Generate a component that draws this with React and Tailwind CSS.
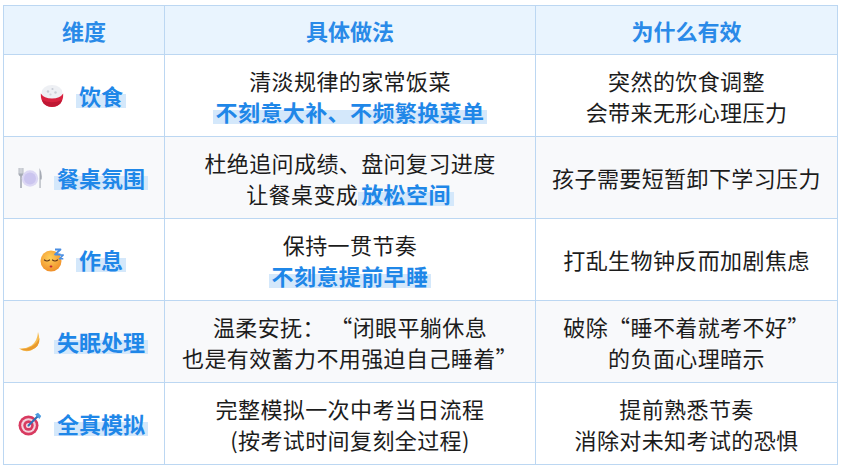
const Rice = () => (
  <svg width="24" height="24" viewBox="0 0 24 24">
    <ellipse cx="12" cy="9" rx="10.5" ry="8" fill="#eef0f4" />
    <circle cx="8" cy="7.5" r="1.2" fill="#c8ccd4" />
    <circle cx="12.5" cy="5" r="1.1" fill="#c8ccd4" />
    <circle cx="15.5" cy="8.5" r="1.2" fill="#c8ccd4" />
    <circle cx="10.5" cy="10.5" r="1.1" fill="#d2d5dc" />
    <path d="M0.8 9.5 Q0.5 22.5 12 23 Q23.5 22.5 23.2 9.5 Q20 14.5 12 14.5 Q4 14.5 0.8 9.5 Z" fill="#d8223f" />
    <path d="M2 16 Q12 20.5 22 16 Q20 22.5 12 22.8 Q4 22.5 2 16 Z" fill="#bf1834" />
  </svg>
);

const Plate = () => (
  <svg width="24" height="24" viewBox="0 0 24 24">
    <rect x="0.6" y="2" width="1" height="6" fill="#a6abb5" />
    <rect x="2.5" y="2" width="1" height="6" fill="#a6abb5" />
    <rect x="4.4" y="2" width="1" height="6" fill="#a6abb5" />
    <path d="M0.6 7.5 H5.4 V9 L3.8 10.5 V22 H2.2 V10.5 L0.6 9 Z" fill="#a6abb5" />
    <circle cx="12" cy="12.5" r="8.2" fill="#dcd8f4" />
    <circle cx="12" cy="12.5" r="6" fill="#cbc5ef" />
    <path d="M21.5 2 Q24.5 7 23.6 13.5 H22.6 V22 H21.5 Z" fill="#a6abb5" />
  </svg>
);

const Sleep = () => (
  <svg width="24" height="24" viewBox="0 0 24 24">
    <defs>
      <radialGradient id="sf" cx="0.45" cy="0.35" r="0.65">
        <stop offset="0" stopColor="#ffd05a" />
        <stop offset="1" stopColor="#f0902a" />
      </radialGradient>
    </defs>
    <circle cx="11" cy="13" r="10.5" fill="url(#sf)" />
    <path d="M4.5 12 Q7 14 9.5 12" stroke="#5c3318" strokeWidth="1.2" fill="none" strokeLinecap="round" />
    <path d="M12.5 12 Q15 14 17.5 12" stroke="#5c3318" strokeWidth="1.2" fill="none" strokeLinecap="round" />
    <ellipse cx="11" cy="18.5" rx="1.4" ry="1.1" fill="#c2263a" />
    <path d="M15 1.5 H20.5 L15 6.5 H20.5" stroke="#4a8ee2" strokeWidth="1.8" fill="none" strokeLinejoin="round" />
    <path d="M19.5 7 H23.3 L19.5 10.8 H23.3" stroke="#4a8ee2" strokeWidth="1.5" fill="none" strokeLinejoin="round" />
  </svg>
);

const Moon = () => (
  <svg width="24" height="24" viewBox="0 0 24 24">
    <path d="M20 2 Q24.5 16 13 20.5 Q6 22.5 1 18.5 Q8 19 13.5 15.5 Q19.5 11 20 2 Z" fill="#f6bd52" />
    <path d="M21.5 8 Q22 17 13 20 Q7 21.5 2.5 19 Q8 19.5 13.5 16.5 Q19.5 13 21.5 8 Z" fill="#e99a2e" />
  </svg>
);

const Target = () => (
  <svg width="24" height="24" viewBox="0 0 24 24">
    <circle cx="10.5" cy="13.5" r="10" fill="#d83a60" />
    <circle cx="10.5" cy="13.5" r="7.3" fill="#f4d2dc" />
    <circle cx="10.5" cy="13.5" r="5.2" fill="#d83a60" />
    <circle cx="10.5" cy="13.5" r="2.6" fill="#f4d2dc" />
    <path d="M10.5 13.5 L19.5 4.5" stroke="#2f6fb6" strokeWidth="2" strokeLinecap="round" />
    <path d="M17 2.5 L20 0.8 L23.2 4 L21.5 7 Z" fill="#4a9be0" />
  </svg>
);

const Hl = ({ children }) => (
  <span className="font-bold text-[#1f87e8] px-[3px] bg-[linear-gradient(transparent_48%,#d4e8fb_48%,#d4e8fb_92%,transparent_92%)]">
    {children}
  </span>
);

const rows = [
  {
    icon: <Rice />,
    label: '饮食',
    how: (
      <>
        清淡规律的家常饭菜
        <br />
        <Hl>不刻意大补、不频繁换菜单</Hl>
      </>
    ),
    why: (
      <>
        突然的饮食调整
        <br />
        会带来无形心理压力
      </>
    ),
  },
  {
    icon: <Plate />,
    label: '餐桌氛围',
    how: (
      <>
        杜绝追问成绩、盘问复习进度
        <br />
        让餐桌变成<Hl>放松空间</Hl>
      </>
    ),
    why: <>孩子需要短暂卸下学习压力</>,
  },
  {
    icon: <Sleep />,
    label: '作息',
    how: (
      <>
        保持一贯节奏
        <br />
        <Hl>不刻意提前早睡</Hl>
      </>
    ),
    why: <>打乱生物钟反而加剧焦虑</>,
  },
  {
    icon: <Moon />,
    label: '失眠处理',
    how: (
      <>
        温柔安抚： “闭眼平躺休息
        <br />
        也是有效蓄力不用强迫自己睡着”
      </>
    ),
    why: (
      <>
        破除“睡不着就考不好”
        <br />
        的负面心理暗示
      </>
    ),
  },
  {
    icon: <Target />,
    label: '全真模拟',
    how: (
      <>
        完整模拟一次中考当日流程
        <br />
        (按考试时间复刻全过程)
      </>
    ),
    why: (
      <>
        提前熟悉节奏
        <br />
        消除对未知考试的恐惧
      </>
    ),
  },
];

export default function App() {
  return (
    <div className="w-[843px] h-[473px] bg-white pl-[3px] pt-[5px] font-['Noto_Sans_CJK_SC',sans-serif] text-[#1c1c1c]">
      <table className="w-[834px] border-collapse table-fixed">
        <colgroup>
          <col className="w-[161px]" />
          <col className="w-[371px]" />
          <col className="w-[302px]" />
        </colgroup>
        <thead>
          <tr className="h-[49px] bg-[#e9f4fe]">
            {['维度', '具体做法', '为什么有效'].map((h) => (
              <th key={h} className="border border-[#bcd7f2] text-[22px] font-bold text-[#2a8ae8] text-center align-middle">
                {h}
              </th>
            ))}
          </tr>
        </thead>
        <tbody>
          {rows.map((r, i) => (
            <tr key={r.label} className={i % 2 === 1 ? 'h-[82px] bg-[#f8f9fb]' : 'h-[82px] bg-white'}>
              <td className="border border-[#bcd7f2] align-middle">
                <div className="flex items-center justify-center gap-[12px] pr-[2px]">
                  {r.icon}
                  <span className="text-[22px]">
                    <Hl>{r.label}</Hl>
                  </span>
                </div>
              </td>
              <td className="border border-[#bcd7f2] text-center align-middle text-[22px] leading-[31px] tracking-[0.4px]">
                {r.how}
              </td>
              <td className="border border-[#bcd7f2] text-center align-middle text-[22px] leading-[31px] tracking-[0.4px]">
                {r.why}
              </td>
            </tr>
          ))}
        </tbody>
      </table>
    </div>
  );
}
